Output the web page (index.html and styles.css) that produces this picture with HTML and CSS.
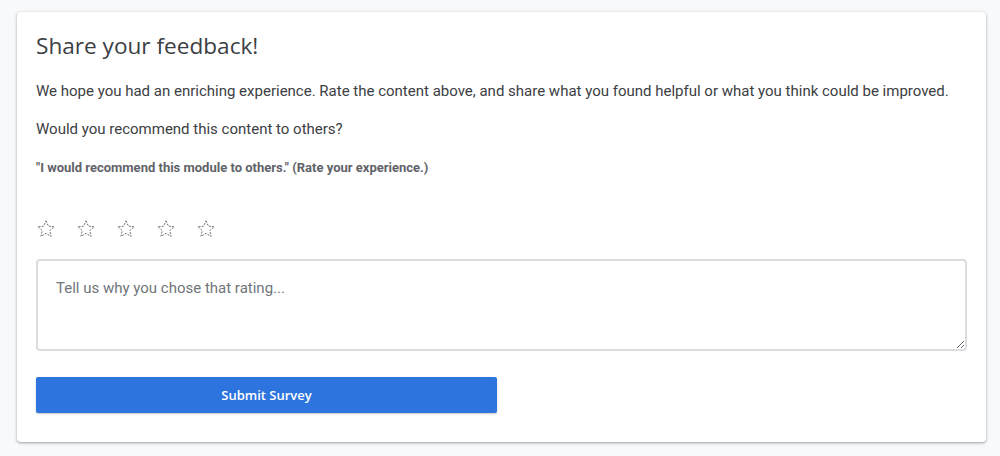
FILE: index.html
```html
<!DOCTYPE html>
<html>
<head>
<meta charset="utf-8">
<link rel="stylesheet" href="styles.css">
</head>
<body>
<div class="card">
  <h1 class="title">Share your feedback!</h1>
  <p class="text">We hope you had an enriching experience. Rate the content above, and share what you found helpful or what you think could be improved.</p>
  <p class="text q">Would you recommend this content to others?</p>
  <p class="hint">"I would recommend this module to others." (Rate your experience.)</p>
  <div class="stars">
    <svg class="star" viewBox="0 0 20 20"><path d="M10 1.8 L12.4 7.2 L18.2 7.7 L13.8 11.6 L15.1 17.4 L10 14.4 L4.9 17.4 L6.2 11.6 L1.8 7.7 L7.6 7.2 Z"/></svg>
    <svg class="star" viewBox="0 0 20 20"><path d="M10 1.8 L12.4 7.2 L18.2 7.7 L13.8 11.6 L15.1 17.4 L10 14.4 L4.9 17.4 L6.2 11.6 L1.8 7.7 L7.6 7.2 Z"/></svg>
    <svg class="star" viewBox="0 0 20 20"><path d="M10 1.8 L12.4 7.2 L18.2 7.7 L13.8 11.6 L15.1 17.4 L10 14.4 L4.9 17.4 L6.2 11.6 L1.8 7.7 L7.6 7.2 Z"/></svg>
    <svg class="star" viewBox="0 0 20 20"><path d="M10 1.8 L12.4 7.2 L18.2 7.7 L13.8 11.6 L15.1 17.4 L10 14.4 L4.9 17.4 L6.2 11.6 L1.8 7.7 L7.6 7.2 Z"/></svg>
    <svg class="star" viewBox="0 0 20 20"><path d="M10 1.8 L12.4 7.2 L18.2 7.7 L13.8 11.6 L15.1 17.4 L10 14.4 L4.9 17.4 L6.2 11.6 L1.8 7.7 L7.6 7.2 Z"/></svg>
  </div>
  <textarea class="reason" placeholder="Tell us why you chose that rating..."></textarea>
  <button class="submit">Submit Survey</button>
</div>
</body>
</html>
```
FILE: styles.css
```css
html, body {
  margin: 0;
  padding: 0;
  background: #f8f9fa;
}
body {
  padding: 12px 14px 14px 17px;
  font-family: Roboto, "Liberation Sans", sans-serif;
}
.card {
  box-sizing: border-box;
  background: #fff;
  border-radius: 4px;
  box-shadow: 0 1px 2px rgba(60,64,67,0.3), 0 1px 3px 1px rgba(60,64,67,0.15);
  padding: 18px 19px 0 19px;
  height: 430px;
}
.title {
  margin: 0;
  font-family: "Open Sans", Roboto, sans-serif;
  font-weight: 400;
  font-size: 22.6px;
  line-height: 32px;
  color: #3c4043;
}
.text {
  margin: 0;
  font-size: 15px;
  line-height: 24px;
  color: #3c4043;
}
.title + .text {
  margin-top: 17px;
}
.q {
  margin-top: 14px;
}
.hint {
  margin: 17px 0 0;
  font-size: 13px;
  font-weight: 700;
  line-height: 20px;
  color: #5f6368;
}
.stars {
  display: flex;
  gap: 20px;
  margin-top: 41px;
}
.star {
  width: 20px;
  height: 20px;
  fill: none;
  stroke: #70757a;
  stroke-width: 1;
  stroke-dasharray: 2 1.2;
}
.reason {
  display: block;
  box-sizing: border-box;
  width: 931px;
  height: 92px;
  margin-top: 20px;
  border: 2px solid #dadce0;
  border-radius: 4px;
  padding: 15px 18px;
  font-family: Roboto, "Liberation Sans", sans-serif;
  font-size: 15px;
  line-height: 24px;
  color: #3c4043;
  resize: vertical;
  outline: none;
}
.reason::placeholder {
  color: #70757a;
}
.submit {
  display: block;
  width: 461px;
  height: 36px;
  margin-top: 26px;
  border: none;
  border-radius: 2px;
  background: #2d74de;
  color: #fff;
  font-family: "Open Sans", Roboto, sans-serif;
  font-weight: 600;
  font-size: 13px;
  box-shadow: 0 1px 2px rgba(60,64,67,0.3);
  cursor: pointer;
}
```
